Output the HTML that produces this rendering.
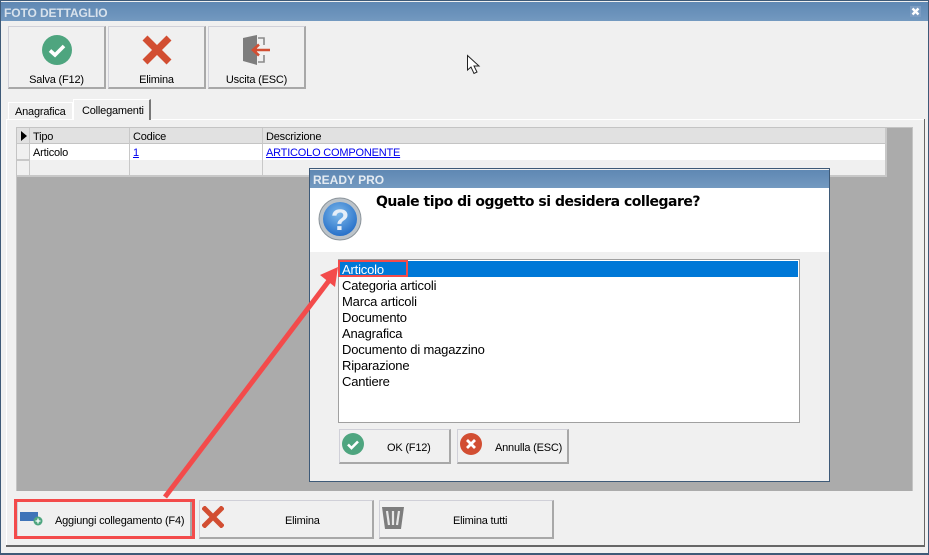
<!DOCTYPE html>
<html><head><meta charset="utf-8"><style>
html,body{margin:0;padding:0;width:929px;height:555px;overflow:hidden;background:#f0f0f0}
body{position:relative;font-family:"Liberation Sans",sans-serif;font-size:11px;letter-spacing:-.2px;color:#000}
.a{position:absolute;box-sizing:border-box}
.t{position:absolute;white-space:nowrap;line-height:16px}
.btn{position:absolute;box-sizing:border-box;background:#f0f0f0;border:1px solid;border-color:#d0d0d8 #a8a8a8 #a8a8a8 #d0d0d8;border-width:1px 2px 2px 1px}
.title{position:absolute;background:linear-gradient(#5f88b3,#7399c0);color:#d8e2ec;font-weight:bold;font-size:12px;letter-spacing:-.1px}
.tb{text-align:center;position:absolute;left:0;right:0;line-height:16px}
.hc{background:#e1e1e1}
.li{font-size:13px;letter-spacing:-.18px;left:342px}
a{color:#00e;text-decoration:underline}
</style></head><body>
<!-- window frame -->
<div class="a" style="left:0;top:0;width:929px;height:555px;border:1px solid #3e5a78;border-width:1px 1px 2px 1px"></div>
<div class="title" style="left:1px;top:2px;width:927px;height:19px;line-height:23px;padding-left:3px;box-sizing:border-box">FOTO DETTAGLIO</div>
<div class="a" style="left:910px;top:6px;width:11px;height:11px;background:#7b9cc2"></div>
<svg class="a" style="left:910px;top:6px" width="11" height="11"><path d="M2.5 2.5L8.5 8.5M8.5 2.5L2.5 8.5" stroke="#fff" stroke-width="2.4"/></svg>

<!-- toolbar -->
<div class="btn" style="left:8px;top:26px;width:98px;height:63px"><div class="tb" style="top:45px">Salva (F12)</div></div>
<div class="btn" style="left:108px;top:26px;width:98px;height:63px"><div class="tb" style="top:45px">Elimina</div></div>
<div class="btn" style="left:208px;top:26px;width:98px;height:63px"><div class="tb" style="top:45px">Uscita (ESC)</div></div>
<svg class="a" style="left:42px;top:35px" width="30" height="30"><circle cx="15" cy="15" r="15" fill="#4ea57f"/><path d="M8 15.5L13 20L22 11" fill="none" stroke="#fff" stroke-width="3.6"/></svg>
<svg class="a" style="left:142px;top:35px" width="30" height="30"><path d="M3 3L27 27M27 3L3 27" stroke="#d24e32" stroke-width="7"/></svg>
<svg class="a" style="left:242px;top:34px" width="30" height="32"><path d="M1 4L15 1V31L1 27Z" fill="#7d7d7d"/><path d="M16 4H22V11M22 21V28H16" fill="none" stroke="#8a8a8a" stroke-width="1.6"/><path d="M11 16H28M17 10.5L11 16L17 21.5" fill="none" stroke="#d24e32" stroke-width="2.6"/></svg>

<!-- tabs -->
<div class="a" style="left:6px;top:119px;width:918px;height:1px;background:#fff"></div>
<div class="a" style="left:924px;top:119px;width:1px;height:426px;background:#666"></div>
<div class="a" style="left:6px;top:120px;width:1px;height:425px;background:#fff"></div>
<div class="a" style="left:8px;top:102px;width:65px;height:17px;border:1px solid #fff;border-bottom:0"></div>
<div class="t" style="left:15px;top:104px">Anagrafica</div>
<div class="a" style="left:73px;top:99px;width:78px;height:21px;background:#f0f0f0;border-top:1px solid #fff;border-left:1px solid #fff;border-right:2px solid #777"></div>
<div class="t" style="left:82px;top:103px">Collegamenti</div>

<!-- grid -->
<div class="a" style="left:16px;top:127px;width:897px;height:364px;background:#ababab;border:1px solid #c4c4c4;border-bottom:0"></div>
<div class="a" style="left:17px;top:128px;width:870px;height:49px;background:#f0f0f0;border-right:2px solid #c8c8c8;border-bottom:2px solid #c8c8c8"></div>
<div class="a hc" style="left:17px;top:128px;width:868px;height:16px;border-bottom:1px solid #c4c4c4"></div>
<div class="a" style="left:30px;top:144px;width:855px;height:16px;background:#fff"></div>
<div class="a" style="left:29px;top:128px;width:1px;height:47px;background:#c8c8c8"></div>
<div class="a" style="left:129px;top:128px;width:1px;height:47px;background:#c8c8c8"></div>
<div class="a" style="left:262px;top:128px;width:1px;height:47px;background:#c8c8c8"></div>
<div class="a" style="left:17px;top:143px;width:12px;height:1px;background:#c8c8c8"></div>
<div class="a" style="left:17px;top:159px;width:12px;height:2px;background:#c8c8c8"></div>
<svg class="a" style="left:20px;top:131px" width="8" height="10"><path d="M1 0L7 5L1 10Z" fill="#000"/></svg>
<div class="t" style="left:33px;top:129px">Tipo</div>
<div class="t" style="left:133px;top:129px">Codice</div>
<div class="t" style="left:266px;top:129px">Descrizione</div>
<div class="t" style="left:33px;top:145px">Articolo</div>
<div class="t" style="left:133px;top:145px"><a>1</a></div>
<div class="t" style="left:266px;top:145px"><a>ARTICOLO COMPONENTE</a></div>

<!-- bottom -->
<div class="a" style="left:6px;top:545px;width:919px;height:2px;background:#666"></div>
<div class="btn" style="left:17px;top:500px;width:175px;height:39px"><div class="t" style="left:37px;top:12px">Aggiungi collegamento (F4)</div></div>
<div class="btn" style="left:199px;top:500px;width:175px;height:39px"><div class="t" style="left:85px;top:12px">Elimina</div></div>
<div class="btn" style="left:379px;top:500px;width:175px;height:39px"><div class="t" style="left:73px;top:12px">Elimina tutti</div></div>
<svg class="a" style="left:20px;top:511px" width="24" height="16"><rect x="0" y="1" width="18" height="9" fill="#3f74b8"/><circle cx="18" cy="10" r="4.5" fill="#4ea57f"/><path d="M15.5 10H20.5M18 7.5V12.5" stroke="#fff" stroke-width="1.3"/></svg>
<svg class="a" style="left:202px;top:506px" width="22" height="22"><path d="M1 1L21 21M21 1L1 21" stroke="#d24e32" stroke-width="5"/></svg>
<svg class="a" style="left:382px;top:507px" width="22" height="22"><path d="M0 0H22L19 22H3Z" fill="#7d7d7d"/><path d="M5 4L7 18M11 4V18M17 4L15 18" stroke="#e8e8e8" stroke-width="2.2"/></svg>
<div class="a" style="left:14px;top:499px;width:181px;height:40px;border:3px solid #f34b4b"></div>

<!-- cursor -->
<svg class="a" style="left:466px;top:54px" width="16" height="22"><path d="M1.5 1.5V16L5 13L8 19.5L11 18L8 12H13Z" fill="#fff" stroke="#222" stroke-width="1"/></svg>

<!-- dialog -->
<div class="a" style="left:309px;top:168px;width:521px;height:314px;background:#f0f0f0;border:1px solid #3e5a78"></div>
<div class="title" style="left:310px;top:170px;width:519px;height:18px;line-height:20px;padding-left:3px;box-sizing:border-box;color:#e4ebf2;letter-spacing:0">READY PRO</div>
<div class="a" style="left:310px;top:188px;width:519px;height:64px;background:#fff"></div>
<svg class="a" style="left:318px;top:197px" width="44" height="44"><defs><radialGradient id="g" cx=".45" cy=".35" r=".75"><stop offset="0" stop-color="#7db8ea"/><stop offset="1" stop-color="#1b66c4"/></radialGradient></defs><circle cx="22" cy="22" r="21" fill="#bcc3c9" stroke="#8b949b"/><circle cx="22" cy="22" r="17" fill="url(#g)"/><text x="22" y="33" text-anchor="middle" font-family="Liberation Sans" font-weight="bold" font-size="30" fill="#e6eef8">?</text></svg>
<div class="t" style="left:376px;top:193px;font-family:'DejaVu Sans',sans-serif;font-weight:bold;font-size:14px;line-height:18px;letter-spacing:-.49px">Quale tipo di oggetto si desidera collegare?</div>
<div class="a" style="left:338px;top:259px;width:462px;height:164px;background:#fff;border:1px solid #a0a0a0"></div>
<div class="a" style="left:339px;top:261px;width:459px;height:16px;background:#0078d7"></div>
<div class="t li" style="top:262px;color:#fff">Articolo</div>
<div class="t li" style="top:278px">Categoria articoli</div>
<div class="t li" style="top:294px">Marca articoli</div>
<div class="t li" style="top:310px">Documento</div>
<div class="t li" style="top:326px">Anagrafica</div>
<div class="t li" style="top:342px">Documento di magazzino</div>
<div class="t li" style="top:358px">Riparazione</div>
<div class="t li" style="top:374px">Cantiere</div>
<div class="a" style="left:338px;top:260px;width:70px;height:17px;border:2px solid #f34b4b"></div>
<div class="btn" style="left:339px;top:429px;width:112px;height:35px"><div class="t" style="left:47px;top:10px">OK (F12)</div></div>
<div class="btn" style="left:457px;top:429px;width:112px;height:35px"><div class="t" style="left:37px;top:10px">Annulla (ESC)</div></div>
<svg class="a" style="left:342px;top:433px" width="22" height="22"><circle cx="11" cy="11" r="11" fill="#4ea57f"/><path d="M6 11.5L9.5 15L16 8.5" fill="none" stroke="#fff" stroke-width="2.6"/></svg>
<svg class="a" style="left:460px;top:433px" width="22" height="22"><circle cx="11" cy="11" r="11" fill="#d24e32"/><path d="M7 7L15 15M15 7L7 15" stroke="#fff" stroke-width="2.8"/></svg>

<!-- arrow -->
<svg class="a" style="left:0;top:0" width="929" height="555"><path d="M165 497L331 278" stroke="#f34b4b" stroke-width="5" fill="none"/><path d="M338 267L335 287L320 275Z" fill="#f34b4b"/></svg>
</body></html>
